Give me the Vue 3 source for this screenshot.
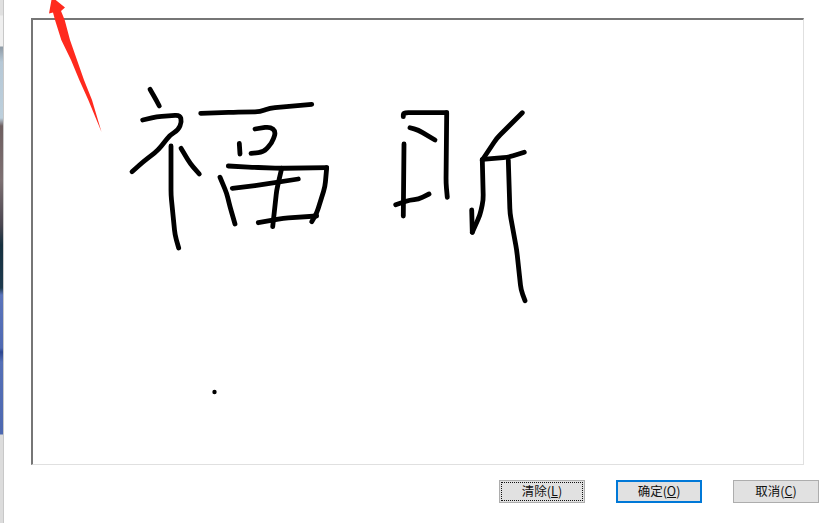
<script setup>
const strokes = [
  [[150, 89.3], [154, 96], [159.3, 106]],
  [[142.7, 120], [156.7, 116.7], [180, 115], [181.7, 121.7], [178.3, 130], [170, 135], [158.3, 150], [143.3, 161.7], [132, 171.7]],
  [[171, 146], [171, 195], [175, 235], [178.7, 248]],
  [[181, 148.3], [190, 163.3], [199.3, 174]],
  [[200.7, 113.3], [233.3, 112.3], [260, 111.7], [270, 108], [311.7, 104.3]],
  [[255, 129], [270, 126.7], [276, 131.7], [271.7, 143.3], [263.3, 152.3], [251, 153.3]],
  [[239.3, 143.3], [240, 154]],
  [[228.3, 166], [253.3, 167.3], [280, 168.3], [326.7, 167.7]],
  [[326.7, 167.7], [325, 186.7], [316.7, 213.3], [311.7, 221.7]],
  [[220, 177.3], [226.7, 193.3], [230, 206.7], [235, 224]],
  [[232.3, 188.3], [260, 185], [298.3, 179]],
  [[281.7, 168.3], [276.7, 190], [272.7, 226.7]],
  [[258.3, 222.7], [283.3, 218.3], [316.7, 216]],
  [[403.3, 116.7], [403.3, 112.7], [446.7, 112.7]],
  [[446.7, 112.7], [446, 183.3], [447.3, 197.3]],
  [[410, 127.7], [418.3, 130], [435, 140]],
  [[404, 144], [403.3, 216]],
  [[395.7, 204.7], [410, 200], [418.3, 199.3], [429, 194]],
  [[522.3, 112.7], [496.7, 138.3], [482.3, 160]],
  [[482.3, 160], [483.3, 200], [480, 215], [472.3, 232.3]],
  [[472.3, 232.3], [471.7, 210]],
  [[482.3, 159.3], [508.3, 157.3], [524.3, 152.3]],
  [[508.3, 160], [510, 213.3], [516.7, 250], [521, 290], [525, 300.7]],
]

// Rounds each interior vertex of a stroke so it reads as a pen line.
function toPath(points) {
  const radius = 5
  let d = `M${points[0][0]} ${points[0][1]}`
  for (let i = 1; i < points.length - 1; i++) {
    const [x, y] = points[i]
    const [px, py] = points[i - 1]
    const [nx, ny] = points[i + 1]
    const toPrev = Math.hypot(px - x, py - y)
    const toNext = Math.hypot(nx - x, ny - y)
    const a = Math.min(radius, toPrev / 2) / toPrev
    const b = Math.min(radius, toNext / 2) / toNext
    d += `L${x + (px - x) * a} ${y + (py - y) * a}`
    d += `Q${x} ${y} ${x + (nx - x) * b} ${y + (ny - y) * b}`
  }
  const last = points[points.length - 1]
  return `${d}L${last[0]} ${last[1]}`
}
const paths = strokes.map(toPath)

const buttons = [
  { label: "清除", key: "L", state: "focused" },
  { label: "确定", key: "O", state: "default" },
  { label: "取消", key: "C", state: "" },
]
</script>

<template>
  <div class="screen">
    <div class="edge"></div>
    <div class="dialog">
      <div class="canvas">
        <svg class="ink" viewBox="33 20 770 444" width="770" height="444">
          <path v-for="(d, i) in paths" :key="i" :d="d" />
          <circle cx="214.5" cy="392" r="2.2" />
        </svg>
      </div>
      <div class="actions">
        <button v-for="b in buttons" :key="b.key" type="button" class="btn" :class="b.state">
          <span class="btn-text">{{ b.label }}(<u>{{ b.key }}</u>)</span>
        </button>
      </div>
    </div>
    <svg class="arrow" viewBox="0 0 120 140" width="120" height="140">
      <polygon points="52,-3 65,7.5 61,11 64.7,20 70,40 77,60 84,80 92,100 101.5,132 88.3,100 79.3,80 71,60 61.3,40 55,20 53,12.5 49,13.5" />
    </svg>
  </div>
</template>

<style scoped>
.screen {
  position: relative;
  display: flex;
  width: 837px;
  height: 523px;
  overflow: hidden;
  background: #fff;
  font-family: "Noto Sans CJK SC", "Noto Sans", sans-serif;
}
.edge {
  width: 3px;
  flex: none;
  border-right: 1px solid #c8c8c8;
  background: linear-gradient(
    to bottom,
    #e0e0e0 0,
    #e0e0e0 15px,
    #efefef 16px,
    #efefef 46px,
    #8f9ba6 47px,
    #b6c8d6 62px,
    #bccfdc 118px,
    #6e5f60 126px,
    #7d7072 180px,
    #4a4650 225px,
    #15303f 245px,
    #1d3a4e 288px,
    #5a74bb 295px,
    #4f69b2 348px,
    #2c4690 352px,
    #546fb6 362px,
    #4d68b0 434px,
    #dcdcdc 435px,
    #dcdcdc 523px
  );
}
.dialog {
  flex: 1;
  display: flex;
  flex-direction: column;
  padding: 18px 18px 0 27px;
}
.canvas {
  width: 773px;
  height: 447px;
  box-sizing: border-box;
  border-style: solid;
  border-color: #767676 #e0e0e0 #e0e0e0 #767676;
  border-width: 2px 1px 1px 2px;
  background: #fff;
  overflow: hidden;
}
.ink {
  display: block;
}
.ink path {
  fill: none;
  stroke: #000;
  stroke-width: 4.8;
  stroke-linecap: round;
  stroke-linejoin: round;
}
.ink circle {
  fill: #000;
}
.actions {
  display: flex;
  justify-content: flex-end;
  gap: 31px;
  margin-top: 15px;
}
.btn {
  width: 86px;
  height: 23px;
  box-sizing: border-box;
  padding: 0;
  border: 1px solid #adadad;
  background: #e1e1e1;
  color: #111;
  font: 12.5px/1 "Noto Sans CJK SC", "Noto Sans", sans-serif;
  display: flex;
  align-items: center;
  justify-content: center;
}
.btn.default {
  border: 2px solid #0078d7;
}
.btn.focused {
  position: relative;
}
.btn.focused::after {
  content: "";
  position: absolute;
  inset: 1px;
  border: 1px dotted #111;
}
.btn-text {
  white-space: nowrap;
}
.arrow {
  position: absolute;
  left: 0;
  top: 0;
  pointer-events: none;
}
.arrow polygon {
  fill: #ff2a1e;
}
</style>
